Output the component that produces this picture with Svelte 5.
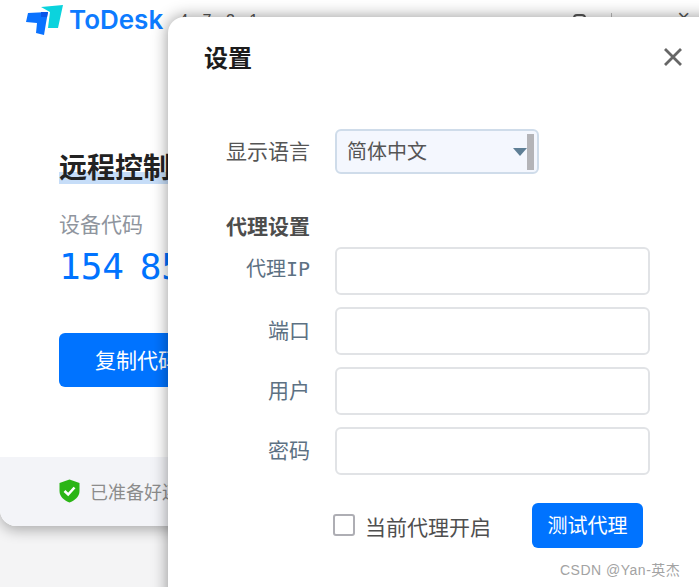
<script>
  const rows = [
    { label: '代理IP', mono: true },
    { label: '端口', mono: false },
    { label: '用户', mono: false },
    { label: '密码', mono: false }
  ];
</script>

<div class="page">
  <div class="app">
    <header class="top">
      <svg class="logo" width="40" height="32" viewBox="0 0 40 32" aria-hidden="true">
        <polygon points="15,2 37,0 32,23 22,23 24,7" fill="#0bd3dd" />
        <polygon points="2,8 22,7 20,18 18,30 10,28 11,18 0,17" fill="#0a72ff" />
        <polygon points="15,7 22,7 21,12 15,12" fill="#0a55e8" />
      </svg>
      <span class="brand">ToDesk</span>
      <span class="version">4.7.2.1</span>
      <span class="spacer"></span>
      <span class="win-icon"></span>
      <span class="win-sep"></span>
      <span class="win-x">×</span>
    </header>

    <main class="main">
      <h1><span class="sel">远程控制</span></h1>
      <div class="code-label">设备代码</div>
      <div class="code">154 854 321</div>
      <button class="copy">复制代码</button>
    </main>

    <footer class="status">
      <svg width="21" height="24" viewBox="0 0 21 24" aria-hidden="true">
        <path d="M10.5 0.5 L20.5 4 V12 C20.5 18 15.500 21.500 10.500 23.500 C5.500 21.500 0.500 18 0.500 12 V4 Z" fill="#2bb516" />
        <path d="M5.500 12 L9.200 15.500 L15.500 8.500" fill="none" stroke="#fff" stroke-width="2.600" />
      </svg>
      <span class="status-text">已准备好连接</span>
    </footer>
  </div>

  <section class="dialog">
    <div class="dialog-head">
      <h2>设置</h2>
      <svg class="close" width="18" height="18" viewBox="0 0 18 18" aria-hidden="true">
        <path d="M1 1 L17 17 M17 1 L1 17" stroke="#666" stroke-width="2.800" fill="none" />
      </svg>
    </div>

    <div class="row select-row">
      <span class="label dark">显示语言</span>
      <div class="select">
        <span class="select-text">简体中文</span>
        <span class="caret"></span>
        <span class="thumb"></span>
      </div>
    </div>

    <div class="row section-row">
      <span class="label section">代理设置</span>
    </div>

    <div class="fields">
      {#each rows as row}
        <div class="row">
          <span class="label" class:mono={row.mono}>{row.label}</span>
          <input class="field" type="text" />
        </div>
      {/each}
    </div>

    <div class="actions">
      <span class="check"></span>
      <span class="check-text">当前代理开启</span>
      <button class="test">测试代理</button>
    </div>
  </section>

  <div class="mark">CSDN @Yan-英杰</div>
</div>

<style>
  :global(body) {
    margin: 0;
    background: #f4f4f5;
    font-family: "Noto Sans CJK SC", "Liberation Sans", sans-serif;
  }
  .page {
    position: relative;
    width: 699px;
    height: 587px;
    overflow: hidden;
    background: #f4f4f5;
  }
  .app {
    width: 699px;
    height: 526px;
    display: flex;
    flex-direction: column;
    background: #fff;
    border-radius: 0 0 16px 16px;
    box-shadow: 0 4px 14px rgba(0, 0, 0, 0.3);
    overflow: hidden;
  }
  .top {
    height: 40px;
    display: flex;
    align-items: flex-start;
    padding: 0 9px 0 26px;
    flex: none;
  }
  .logo {
    margin-top: 5px;
    flex: none;
  }
  .brand {
    margin: 2px 0 0 3px;
    font: 600 26px/36px Inter, sans-serif;
    color: #0d7bff;
  }
  .version {
    margin: 11px 0 0 16px;
    font: 16px/20px "Liberation Sans", sans-serif;
    letter-spacing: 5px;
    color: #555;
  }
  .spacer { flex: 1; }
  .win-icon {
    width: 13px;
    height: 10px;
    margin: 14px 25px 0 0;
    border: 2px solid #555;
    border-radius: 4px;
    box-sizing: border-box;
  }
  .win-sep {
    width: 1px;
    height: 12px;
    margin: 13px 65px 0 0;
    background: #bbb;
  }
  .win-x {
    font: 22px/20px "Liberation Sans", sans-serif;
    color: #555;
    margin-top: 8px;
  }
  .main {
    flex: 1;
    padding: 106px 0 0 59px;
  }
  h1 {
    margin: 0;
    font-size: 28px;
    line-height: 40px;
    font-weight: 700;
    color: #222;
  }
  .sel {
    display: inline-block;
    background: linear-gradient(transparent 26px, #c6ddf8 26px, #c6ddf8 38px, transparent 38px);
  }
  .code-label {
    margin-top: 22px;
    font-size: 21px;
    line-height: 30px;
    color: #8f959e;
  }
  .code {
    margin-top: 4px;
    font: 36px/50px "DejaVu Sans Mono", monospace;
    word-spacing: -6px;
    color: #0073ff;
    white-space: nowrap;
  }
  .copy {
    display: block;
    margin-top: 41px;
    width: 220px;
    height: 54px;
    border: 0;
    border-radius: 6px;
    background: #0073ff;
    color: #fff;
    font: 21px/50px "Noto Sans CJK SC", sans-serif;
    text-align: left;
    padding: 0 0 2px 36px;
  }
  .status {
    height: 69px;
    flex: none;
    display: flex;
    align-items: center;
    gap: 10px;
    padding: 0 0 2px 59px;
    box-sizing: border-box;
    background: #f3f4f8;
    font-size: 18px;
    color: #8c8c8c;
  }
  .status-text {
    line-height: 24px;
  }
  .dialog {
    position: absolute;
    left: 168px;
    top: 17px;
    width: 560px;
    height: 600px;
    box-sizing: border-box;
    background: #fff;
    border-radius: 16px;
    box-shadow: 0 0 16px rgba(0, 0, 0, 0.42);
    padding: 22px 0 0 0;
  }
  .dialog-head {
    display: flex;
    align-items: center;
    padding-left: 36px;
    width: 514px;
    justify-content: space-between;
    box-sizing: border-box;
  }
  h2 {
    margin: 0;
    font-size: 24px;
    line-height: 36px;
    font-weight: 700;
    color: #1c1c1c;
  }
  .row {
    display: grid;
    grid-template-columns: 142px 315px;
    column-gap: 25px;
    align-items: center;
  }
  .select-row {
    margin-top: 54px;
  }
  .section-row {
    margin-top: 37px;
    margin-bottom: 4px;
    height: 32px;
  }
  .fields {
    display: flex;
    flex-direction: column;
    gap: 12px;
  }
  .label {
    text-align: right;
    font-size: 21px;
    line-height: 30px;
    color: #5d7183;
    margin-top: -4px;
  }
  .label.dark { color: #555; }
  .label.section {
    font-weight: 700;
    color: #4d4d4d;
  }
  .label.mono {
    font-family: "DejaVu Sans Mono", "Noto Sans CJK SC", monospace;
    font-size: 20px;
  }
  .select {
    width: 204px;
    height: 45px;
    box-sizing: border-box;
    display: flex;
    align-items: center;
    padding: 0 3px 0 10px;
    border: 2px solid #cfdcea;
    border-radius: 6px;
    background: #f4f7fe;
  }
  .select-text {
    flex: 1;
    font-size: 20px;
    color: #555;
    line-height: 30px;
    margin-top: -2px;
  }
  .caret {
    width: 0;
    height: 0;
    border-left: 7px solid transparent;
    border-right: 7px solid transparent;
    border-top: 8px solid #5f7f96;
  }
  .thumb {
    width: 7px;
    height: 36px;
    background: #b4b4b8;
  }
  .field {
    box-sizing: border-box;
    width: 315px;
    height: 48px;
    border: 2px solid #e1e3e6;
    border-radius: 6px;
    background: #fff;
    padding: 0 10px;
    outline: none;
  }
  .actions {
    margin-top: 28px;
    height: 45px;
    display: flex;
    align-items: center;
    padding-left: 165px;
  }
  .check {
    width: 22px;
    height: 22px;
    box-sizing: border-box;
    border: 2px solid #aeaeb4;
    border-radius: 3px;
    margin-top: -1px;
  }
  .check-text {
    margin: 0 41px 0 10px;
    font-size: 21px;
    line-height: 30px;
    color: #4f4f4f;
    white-space: nowrap;
  }
  .test {
    width: 111px;
    height: 45px;
    border: 0;
    border-radius: 6px;
    background: #0073ff;
    color: #fff;
    font: 20px/41px "Noto Sans CJK SC", sans-serif;
    padding: 0 0 2px;
  }
  .mark {
    position: absolute;
    left: 560px;
    top: 560px;
    font: 14px/20px "Liberation Sans", "Noto Sans CJK SC", sans-serif;
    letter-spacing: 0.5px;
    color: #a3a3a3;
    white-space: nowrap;
  }
</style>
